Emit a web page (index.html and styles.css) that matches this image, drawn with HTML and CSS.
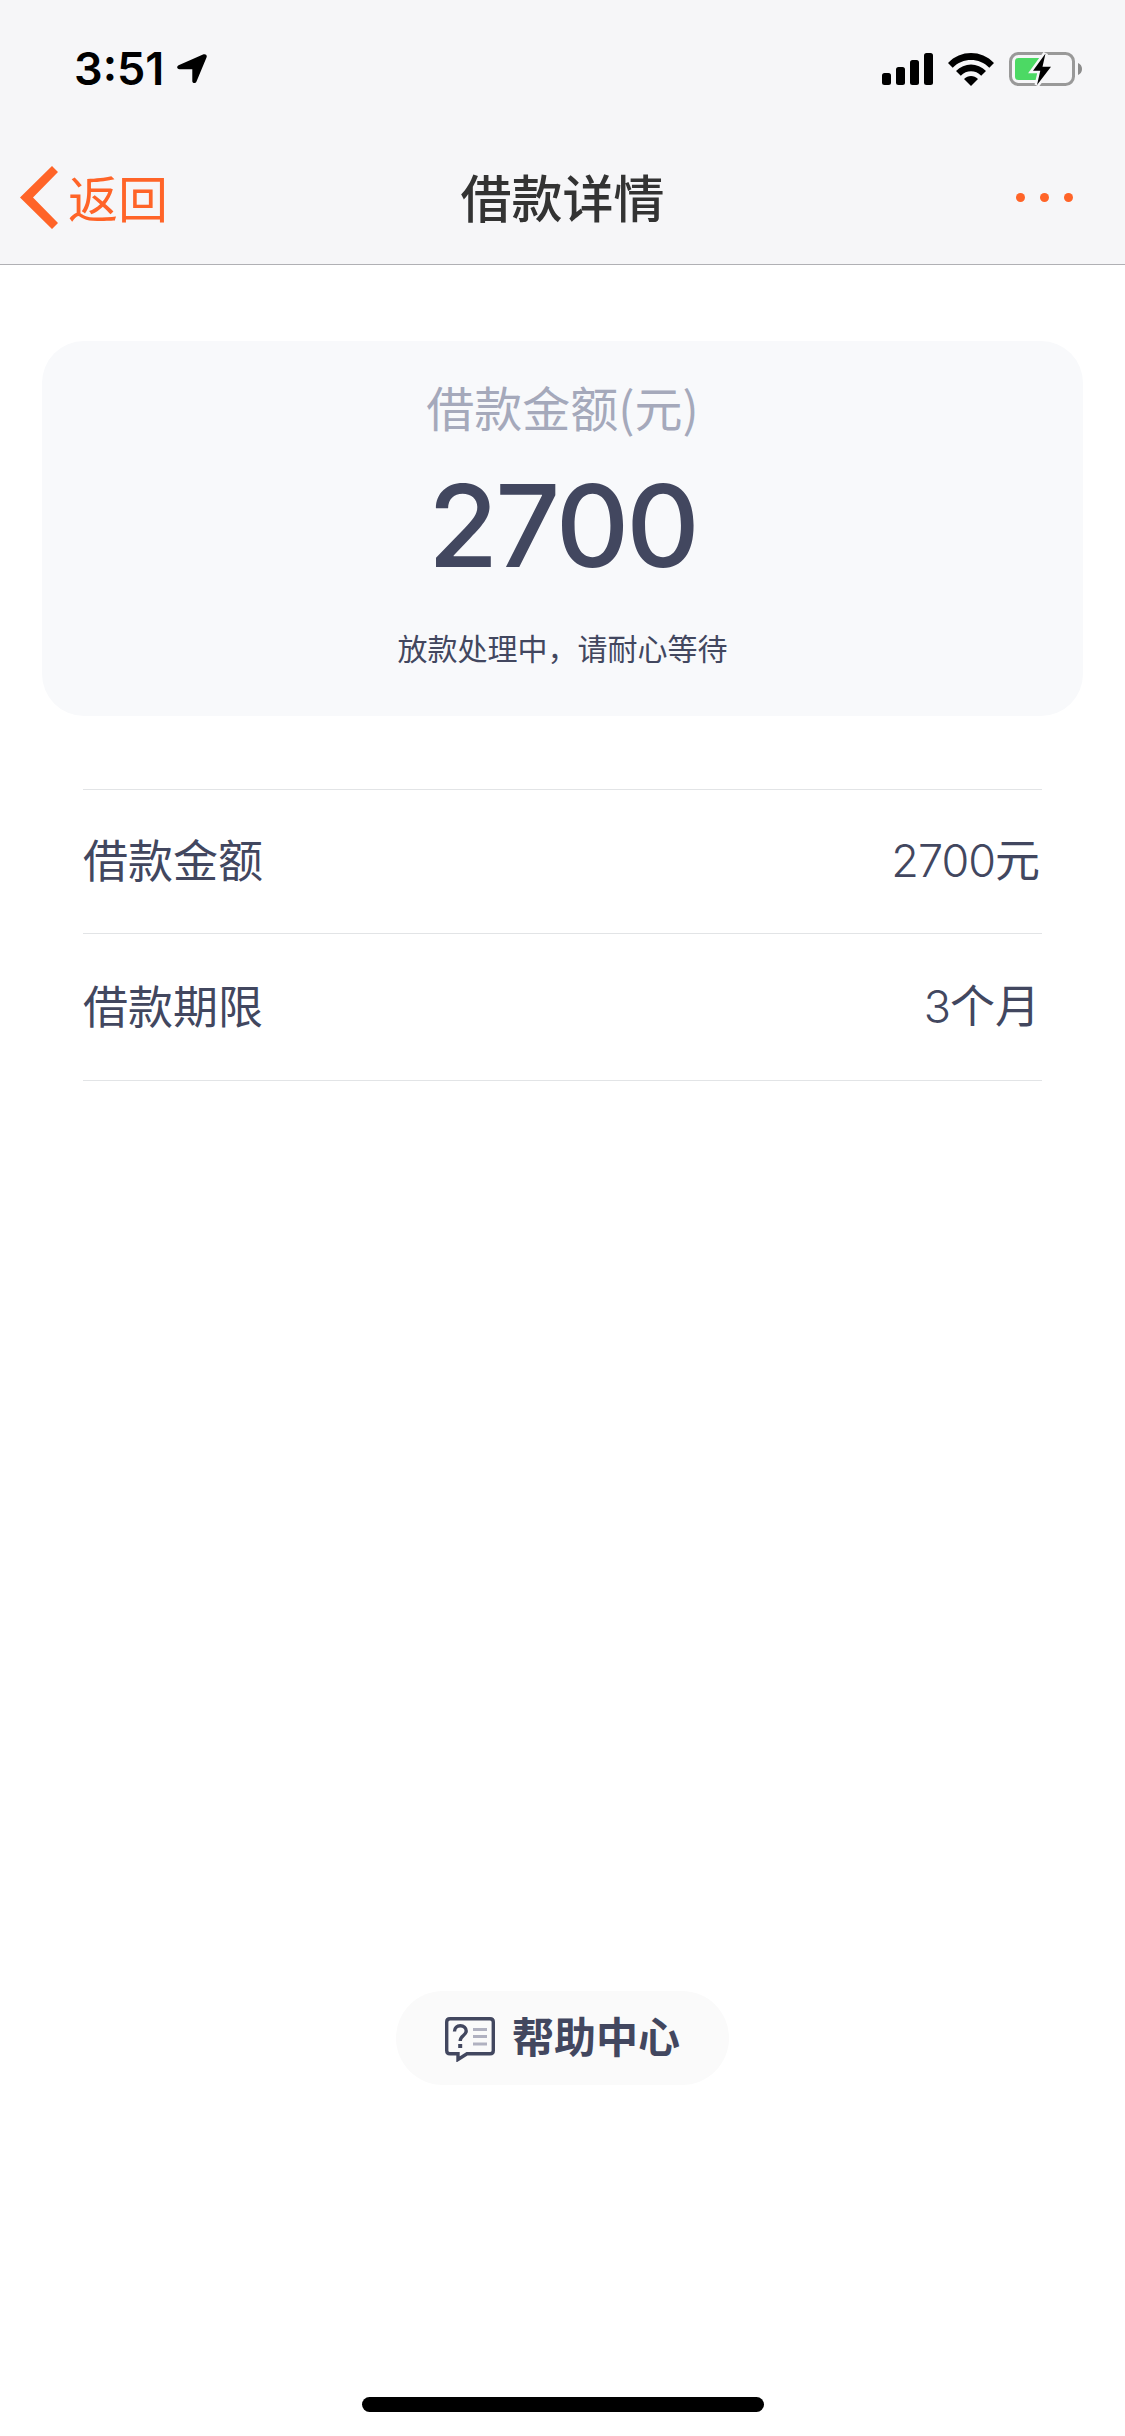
FILE: index.html
```html
<!DOCTYPE html>
<html lang="zh-CN">
  <head>
    <meta charset="UTF-8">
    <title>借款详情</title>
    <link rel="stylesheet" href="styles.css">
  </head>
  <body>
    <header class="header">
      <div class="status-bar">
        <div class="status-left">
          <span class="time">3:51</span>
          <svg class="location" width="30" height="30" viewBox="0 0 30 30">
            <path d="M26 .5C28.500 -.6 30.500 1.300 29.500 3.500L19.500 27.500C18.600 29.800 15.300 29.600 15.300 27V15.200H2.500C-.2 15.200 -.6 12.200 1.600 11.200Z"/>
          </svg>
        </div>
        <div class="status-right">
          <svg width="51" height="32" viewBox="0 0 51 32">
            <rect x="0" y="20" width="9" height="12" rx="2.500"/>
            <rect x="14" y="14" width="9" height="18" rx="2.500"/>
            <rect x="28" y="7" width="9" height="25" rx="2.500"/>
            <rect x="42" y="0" width="9" height="32" rx="2.500"/>
          </svg>
          <svg width="46" height="33" viewBox="0 0 46 33">
            <path d="M0 10C12.500 -3.300 33.500 -3.300 46 10L41.300 14.700C31.300 4.400 14.700 4.400 4.700 14.700Z"/>
            <path d="M8 18C16.300 9.300 29.700 9.300 38 18L33.200 22.700C27.500 16.900 18.500 16.900 12.800 22.700Z"/>
            <path d="M16 26C20 22.100 26 22.100 30 26L23 33Z"/>
          </svg>
          <svg width="73" height="34" viewBox="0 0 73 34">
            <rect class="battery-frame" x="1.500" y="1.500" width="63" height="31" rx="8"/>
            <path class="battery-cap" d="M69 11C71.500 12 73 14.200 73 17S71.500 22 69 23Z"/>
            <rect class="battery-level" x="6" y="6" width="28" height="22" rx="3.500"/>
            <path class="bolt" d="M36.500 1.500L24 18.700H31.300L28 33L42 14.700H33.500Z"/>
          </svg>
        </div>
      </div>
      <nav class="nav">
        <a class="back">
          <svg width="38" height="63" viewBox="0 0 38 63">
            <path d="M32 0L38 6L13 31.500L38 57L32 63L0 31.500Z"/>
          </svg>
          <span>返回</span>
        </a>
        <h1 class="title">借款详情</h1>
        <div class="more">
          <i></i><i></i><i></i>
        </div>
      </nav>
    </header>

    <main class="main">
      <section class="card">
        <div class="card-label">借款金额(元)</div>
        <div class="card-amount">2700</div>
        <div class="card-tip">放款处理中，请耐心等待</div>
      </section>

      <ul class="list">
        <li class="row">
          <span>借款金额</span>
          <span><span class="num">2700</span>元</span>
        </li>
        <li class="row">
          <span>借款期限</span>
          <span><span class="num">3</span>个月</span>
        </li>
      </ul>
    </main>

    <footer class="footer">
      <a class="help">
        <svg width="50" height="45" viewBox="0 0 50 45">
          <path class="bubble" d="M5 1.700H45Q48.300 1.700 48.300 5V33.500Q48.300 36.800 45 36.800H22L13 42.500V36.800H5Q1.700 36.800 1.700 33.500V5Q1.700 1.700 5 1.700Z"/>
          <path class="question" d="M9.500 14.500C9.500 10.500 12 8.800 15.300 8.800C18.800 8.800 21.200 10.900 21.200 14C21.200 18.500 15.200 18.500 15.200 24"/>
          <rect class="question-dot" x="13.200" y="27" width="4" height="4"/>
          <path class="lines" d="M28 12.500H42M28 19.500H42M28 27H42"/>
        </svg>
        <span>帮助中心</span>
      </a>
      <div class="home-indicator"></div>
    </footer>
  </body>
</html>
```
FILE: styles.css
```css
:root {
  --orange: #ff6428;
  --text-primary: #42475f;
  --text-secondary: #a5a9bb;
  --header-bg: #f6f6f8;
  --card-bg: #f8f9fb;
  --line: #e2e4e6;
}

* {
  box-sizing: border-box;
}

body {
  margin: 0;
  height: 2436px;
  display: flex;
  flex-direction: column;
  font-family: "Noto Sans CJK SC", sans-serif;
  background: #fff;
  color: var(--text-primary);
}

svg {
  display: block;
}

.header {
  height: 265px;
  background: var(--header-bg);
  border-bottom: 1px solid #b0b0b4;
}

/* Status bar */
.status-bar {
  height: 132px;
  padding: 6px 43px 0 74px;
  display: flex;
  align-items: center;
  justify-content: space-between;
}

.status-left {
  display: flex;
  align-items: center;
  gap: 13px;
  color: #000;
}

.location {
  margin-bottom: 1px;
}

.time {
  font-family: Inter, sans-serif;
  font-size: 45px;
  font-weight: 600;
  line-height: 54px;
}

.status-right {
  display: flex;
  align-items: center;
  gap: 15px;
}

.battery-frame {
  fill: none;
  stroke: #999;
  stroke-width: 3;
}

.battery-cap {
  fill: #8c8c8c;
}

.battery-level {
  fill: #4cd964;
}

.bolt {
  stroke: var(--header-bg);
  stroke-width: 5;
  paint-order: stroke;
}

/* Navigation */
.nav {
  height: 130px;
  padding: 0 52px 0 20px;
  display: grid;
  grid-template-columns: 1fr auto 1fr;
  align-items: center;
}

.back {
  display: flex;
  align-items: center;
  gap: 10px;
  font-size: 50px;
  line-height: 60px;
  color: var(--orange);
}

.back span {
  padding-bottom: 2px;
}

.back svg {
  fill: var(--orange);
}

.title {
  margin: 0 -32px 0 0;
  padding-bottom: 3px;
  font-size: 51px;
  font-weight: 500;
  line-height: 60px;
  color: #333;
}

.more {
  display: flex;
  justify-content: flex-end;
  gap: 15px;
}

.more i {
  width: 9px;
  height: 9px;
  border-radius: 50%;
  background: var(--orange);
}

/* Amount card */
.main {
  padding: 76px 42px 0;
}

.card {
  height: 375px;
  padding-top: 35px;
  border-radius: 42px;
  background: var(--card-bg);
  text-align: center;
}

.card-label {
  font-size: 48px;
  line-height: 60px;
  color: var(--text-secondary);
}

.card-amount {
  margin-top: 30px;
  font-family: Inter, sans-serif;
  font-size: 114px;
  font-weight: 550;
  line-height: 120px;
  letter-spacing: -3px;
}

.card-tip {
  margin-top: 41px;
  font-size: 30px;
  line-height: 40px;
}

/* Detail rows */
.list {
  margin: 73px 41px 0;
  padding: 0;
  list-style: none;
  border-top: 1px solid var(--line);
}

.row {
  height: 144px;
  padding: 0 2px 5px 0;
  display: flex;
  align-items: center;
  justify-content: space-between;
  border-bottom: 1px solid var(--line);
  font-size: 45px;
  line-height: 60px;
}

.row + .row {
  height: 147px;
  padding-bottom: 4px;
}

.num {
  font-family: Inter, sans-serif;
  font-weight: 350;
  letter-spacing: -1px;
}

/* Footer */
.footer {
  margin-top: auto;
  padding-bottom: 24px;
  display: flex;
  flex-direction: column;
  align-items: center;
}

.help {
  width: 333px;
  height: 94px;
  margin-bottom: 312px;
  display: flex;
  align-items: center;
  justify-content: center;
  gap: 17px;
  border-radius: 47px;
  background: #fafafa;
  font-size: 42px;
  font-weight: 700;
  line-height: 50px;
}

.help svg {
  margin-top: 3px;
}

.help span {
  padding-bottom: 6px;
}

.bubble,
.question,
.lines {
  fill: none;
  stroke: var(--text-primary);
  stroke-width: 3.400;
}

.question-dot {
  fill: var(--text-primary);
}

.lines {
  stroke: #b0b1c0;
  stroke-width: 3;
}

.home-indicator {
  width: 402px;
  height: 15px;
  border-radius: 8px;
  background: #000;
}
```
